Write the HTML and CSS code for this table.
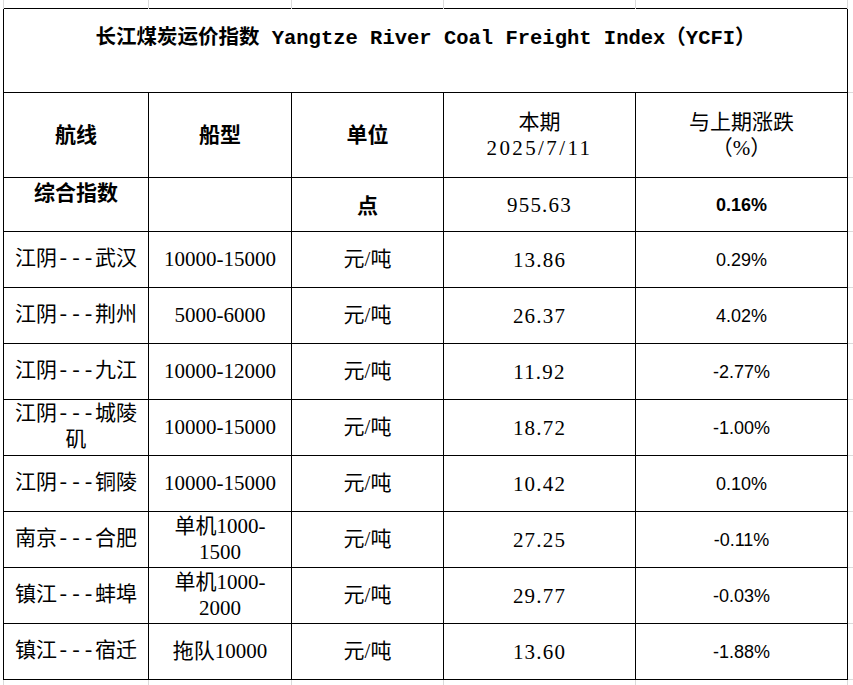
FILE: index.html
```html
<!DOCTYPE html>
<html lang="zh-CN">
<head>
<meta charset="utf-8">
<title>长江煤炭运价指数</title>
<link rel="stylesheet" href="styles.css">
</head>
<body>
<table class="sheet">
  <colgroup>
    <col class="c1"><col class="c2"><col class="c3"><col class="c4"><col class="c5"><col class="cx">
  </colgroup>
  <tr class="gap-top"><td></td><td></td><td></td><td></td><td></td><td class="corner"></td></tr>
  <tr class="title-row">
    <td colspan="5" class="title">长江煤炭运价指数 Yangtze River Coal Freight Index（YCFI）</td>
    <td class="edge"></td>
  </tr>
  <tr class="head-row">
    <th class="b">航线</th>
    <th class="b">船型</th>
    <th class="b">单位</th>
    <th>本期<br><span class="date">2025/7/11</span></th>
    <th>与上期涨跌<br>（%）</th>
    <td class="edge"></td>
  </tr>
  <tr class="sum-row">
    <td class="b top">综合指数</td>
    <td></td>
    <td class="b low">点</td>
    <td class="num">955.63</td>
    <td class="pct b">0.16%</td>
    <td class="edge"></td>
  </tr>
  <tr class="row">
    <td class="route">江阴---武汉</td><td>10000-15000</td><td>元/吨</td><td class="num">13.86</td><td class="pct">0.29%</td><td class="edge"></td>
  </tr>
  <tr class="row">
    <td class="route">江阴---荆州</td><td>5000-6000</td><td>元/吨</td><td class="num">26.37</td><td class="pct">4.02%</td><td class="edge"></td>
  </tr>
  <tr class="row">
    <td class="route">江阴---九江</td><td>10000-12000</td><td>元/吨</td><td class="num">11.92</td><td class="pct">-2.77%</td><td class="edge"></td>
  </tr>
  <tr class="row">
    <td class="route">江阴---城陵矶</td><td>10000-15000</td><td>元/吨</td><td class="num">18.72</td><td class="pct">-1.00%</td><td class="edge"></td>
  </tr>
  <tr class="row">
    <td class="route">江阴---铜陵</td><td>10000-15000</td><td>元/吨</td><td class="num">10.42</td><td class="pct">0.10%</td><td class="edge"></td>
  </tr>
  <tr class="row">
    <td class="route">南京---合肥</td><td>单机1000-<wbr>1500</td><td>元/吨</td><td class="num">27.25</td><td class="pct">-0.11%</td><td class="edge"></td>
  </tr>
  <tr class="row">
    <td class="route">镇江---蚌埠</td><td>单机1000-<wbr>2000</td><td>元/吨</td><td class="num">29.77</td><td class="pct">-0.03%</td><td class="edge"></td>
  </tr>
  <tr class="row">
    <td class="route">镇江---宿迁</td><td>拖队10000</td><td>元/吨</td><td class="num">13.60</td><td class="pct">-1.88%</td><td class="edge"></td>
  </tr>
  <tr class="gap-bottom"><td></td><td></td><td></td><td></td><td></td><td class="corner"></td></tr>
</table>
</body>
</html>
```

FILE: styles.css
```css
html, body {
  margin: 0;
  padding: 0;
  background: #ffffff;
}

.sheet {
  border-collapse: collapse;
  table-layout: fixed;
  width: 850px;
  margin-left: 3px;
}

col.c1 { width: 145px; }
col.c2 { width: 143px; }
col.c3 { width: 152px; }
col.c4 { width: 192px; }
col.c5 { width: 212px; }
col.cx { width: 6px; }

.sheet td,
.sheet th {
  border: 1px solid #000000;
  padding: 0 6px;
  text-align: center;
  vertical-align: middle;
  font-family: "Liberation Serif", "Noto Sans CJK SC", serif;
  font-size: 21px;
  line-height: 26px;
  font-weight: normal;
  color: #000000;
}

.sheet .b { font-weight: bold; }

/* spreadsheet gridlines outside the table */
.gap-top td,
.gap-bottom td {
  border-style: none solid;
  border-color: #dadada;
  padding: 0;
}
.gap-top { height: 8px; }
.gap-bottom { height: 6px; }

.sheet td.edge {
  border-style: none none solid none;
  border-color: #dadada;
  padding: 0;
}
.sheet td.corner {
  border: none;
  padding: 0;
}

.title-row { height: 84px; }
.head-row { height: 85px; }
.sum-row { height: 54px; }
.row { height: 56px; }

.sheet td.title {
  vertical-align: top;
  padding-top: 17px;
  font-family: "Liberation Mono", "Noto Sans CJK SC", monospace;
  font-size: 20.5px;
  font-weight: bold;
}

.date { letter-spacing: 2.4px; }

.sheet td.top {
  vertical-align: top;
  padding-top: 2px;
}
.sheet td.low { padding-top: 4px; }

.sheet td.route {
  font-family: "Liberation Mono", "Noto Sans CJK SC", monospace;
  padding: 2px 5px 0;
}

.sheet td.num {
  letter-spacing: 1.2px;
  padding-top: 2px;
}

.sheet td.pct {
  font-family: "Liberation Sans", "Noto Sans CJK SC", sans-serif;
  font-size: 18px;
  padding-top: 2px;
}
```
